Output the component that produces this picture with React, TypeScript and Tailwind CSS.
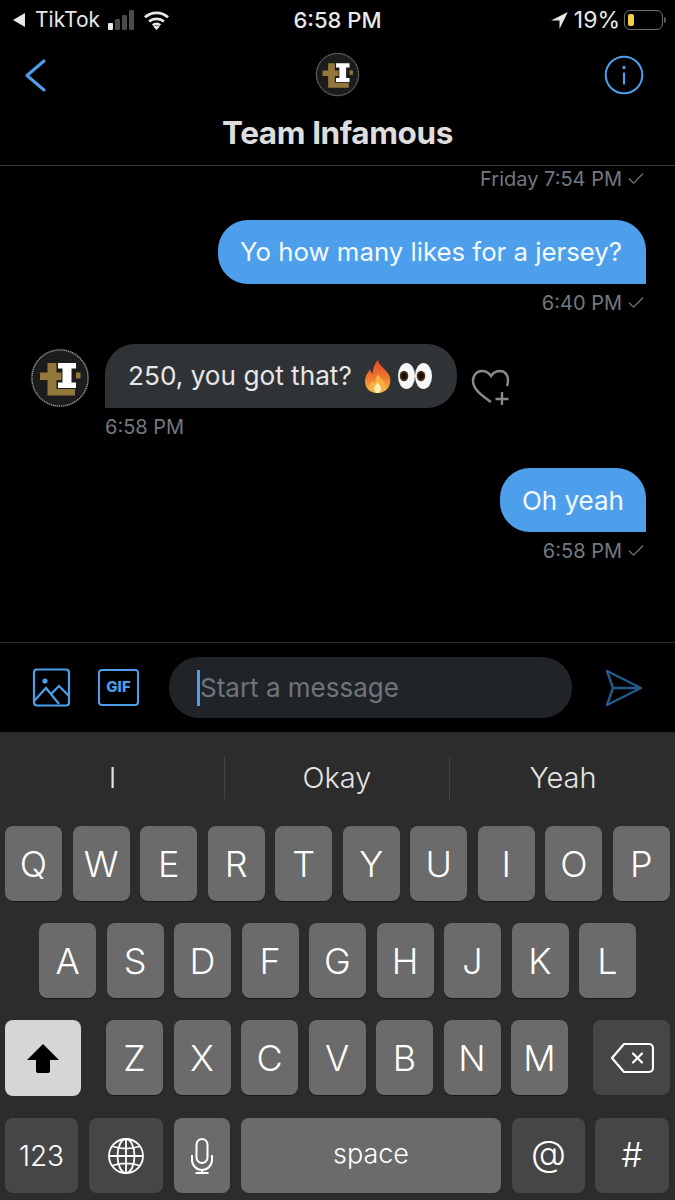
import { Check } from 'lucide-react'

const font = { fontFamily: 'Inter, "Liberation Sans", sans-serif' }

function TeamLogo({ size }: { size: number }) {
  return (
    <svg width={size} height={size} viewBox="0 0 60 60">
      <circle cx="30" cy="30" r="29.500" fill="#1c1c1c" />
      <circle cx="30" cy="30" r="28" fill="none" stroke="#a8a8a8" strokeWidth="1.200" strokeDasharray="1.200 0.800" />
      <path d="M17.500 15h9v9.500h5V32h-5v9h18.500v6.500H17.500V32H10v-7.500h7.500z" fill="#94773a" />
      <path d="M46 24.500h4.500v6H46z" fill="#94773a" />
      <path d="M28 15h18v5.500h-4.500v14H46V40H28v-5.500h4.500v-14H28z" fill="#ffffff" />
    </svg>
  )
}

function Fire() {
  return (
    <svg width="27" height="33" viewBox="0 0 27 33">
      <defs>
        <linearGradient id="flame" x1="0" y1="0" x2="0" y2="1">
          <stop offset="0" stopColor="#e2482a" />
          <stop offset="0.55" stopColor="#f0792c" />
          <stop offset="1" stopColor="#fbc04a" />
        </linearGradient>
      </defs>
      <path d="M14 0c1 6 8 9 11 15 4 8-1 18-11.500 18S-1 24 2 16c1-3 3-4 4-7 1 2 1 4 2.500 5C9 9 10 4 14 0z" fill="url(#flame)" />
      <path d="M14 14c1 4 6 6 7 11 0 5-3 8-7.500 8S5 30 6 25c.5-2 2-3 3-4 .5 1 1 1.500 1.500 2C11 20 12 17 14 14z" fill="#fbb03e" />
      <path d="M13.500 22c1 2 3.500 3.500 3.500 6.500 0 2.500-1.500 4.500-3.500 4.500S10 31 10 28.500c0-2.500 2.500-4 3.500-6.500z" fill="#fdeeb4" />
    </svg>
  )
}

function Eye() {
  return (
    <svg width="17" height="26" viewBox="0 0 17 26">
      <ellipse cx="8.500" cy="13" rx="8.500" ry="13" fill="#f7f7f7" />
      <ellipse cx="6" cy="13" rx="4.300" ry="5.300" fill="#4f2c12" />
      <ellipse cx="6" cy="13" rx="2.600" ry="3.200" fill="#111" />
    </svg>
  )
}

function Stamp({ text, check = true }: { text: string; check?: boolean }) {
  return (
    <div className="flex items-center gap-[4px] text-[20px] leading-[22px] text-[#73787d]">
      <span>{text}</span>
      {check && <Check size={20} strokeWidth={1.5} />}
    </div>
  )
}

function Key({ label, className = 'w-[57px]' }: { label: string; className?: string }) {
  return (
    <div className={`${className} h-[75px] rounded-[8px] bg-[#6b6b6b] shadow-[0_1px_0_#191919] flex items-center justify-center text-[36px] font-light text-white`}>
      {label}
    </div>
  )
}

const row1 = ['Q', 'W', 'E', 'R', 'T', 'Y', 'U', 'I', 'O', 'P']
const row2 = ['A', 'S', 'D', 'F', 'G', 'H', 'J', 'K', 'L']
const row3 = ['Z', 'X', 'C', 'V', 'B', 'N', 'M']

export default function App() {
  return (
    <div className="w-[675px] h-[1200px] bg-black overflow-hidden flex flex-col" style={font}>
      {/* Status bar */}
      <div className="h-[40px] flex items-center justify-between pl-[12px] pr-[9px] text-[#e8e8e8] text-[21px] relative">
        <div className="flex items-center">
          <svg width="14" height="16" viewBox="0 0 14 16"><path d="M13 1v14L1 8z" fill="#e8e8e8" /></svg>
          <span className="ml-[9px]">TikTok</span>
          <div className="ml-[8px] flex items-end gap-[2px] h-[20px]">
            <div className="w-[5px] h-[7px] bg-[#e8e8e8] rounded-[1px]" />
            <div className="w-[5px] h-[11px] bg-[#4a4a4a] rounded-[1px]" />
            <div className="w-[5px] h-[15px] bg-[#4a4a4a] rounded-[1px]" />
            <div className="w-[5px] h-[20px] bg-[#4a4a4a] rounded-[1px]" />
          </div>
          <svg className="ml-[9px]" width="27" height="20" viewBox="0 0 24 19">
            <path d="M1 7a16 16 0 0 1 22 0M5 11a10.500 10.500 0 0 1 14 0M8.500 14.500a5 5 0 0 1 7 0" fill="none" stroke="#e8e8e8" strokeWidth="2.600" />
            <path d="M12 19l-3-3a4 4 0 0 1 6 0z" fill="#e8e8e8" />
          </svg>
        </div>
        <span className="absolute left-0 right-0 text-center text-[22px] font-medium">6:58 PM</span>
        <div className="flex items-center">
          <svg width="19" height="19" viewBox="0 0 17 17"><path d="M16 1L1 8.500h7.500V16z" fill="#e8e8e8" /></svg>
          <span className="ml-[5px] text-[23px]">19%</span>
          <div className="ml-[4px] w-[39px] h-[20px] rounded-[6px] border border-[#6e6e6e] p-[3px]">
            <div className="w-[6px] h-full rounded-[2px] bg-[#f6cf4a]" />
          </div>
          <div className="ml-[1px] w-[2px] h-[6px] bg-[#5a5a5a] rounded-r" />
        </div>
      </div>

      {/* Nav */}
      <div className="h-[126px] border-b border-[#3a3d40] flex flex-col shrink-0">
        <div className="grid grid-cols-[1fr_auto_1fr] items-center h-[75px] pb-[5px]">
          <svg className="ml-[24px]" width="22" height="33" viewBox="0 0 22 33" fill="none" stroke="#4d9fec" strokeWidth="3" strokeLinecap="round" strokeLinejoin="round">
            <path d="M20 2L3 16.500 20 31" />
          </svg>
          <div className="-mt-[2px]"><TeamLogo size={45} /></div>
          <svg className="justify-self-end mr-[31px]" width="40" height="40" viewBox="0 0 40 40">
            <circle cx="20" cy="20" r="18.300" fill="none" stroke="#4d9fec" strokeWidth="2" />
            <circle cx="20" cy="12.500" r="1.700" fill="#4d9fec" />
            <path d="M20 17.500v12" stroke="#4d9fec" strokeWidth="2.200" />
          </svg>
        </div>
        <div className="text-center text-[31.500px] leading-[36px] font-bold tracking-[-0.4px] text-[#dedede]">Team Infamous</div>
      </div>

      {/* Messages */}
      <div className="h-[476px] shrink-0 pr-[29px] pl-[30px] pt-[2px] flex flex-col">
        <div className="self-end"><Stamp text="Friday 7:54 PM" /></div>
        <div className="self-end mt-[30px] h-[64px] pl-[22px] pr-[24px] rounded-[30px] rounded-br-none bg-[#4d9fec] flex items-center text-[25.770px] text-[#f4f9fe]">
          Yo how many likes for a jersey?
        </div>
        <div className="self-end mt-[8px]"><Stamp text="6:40 PM" /></div>
        <div className="mt-[30px] flex items-start">
          <div className="mt-[4px]"><TeamLogo size={60} /></div>
          <div className="ml-[15px]">
            <div className="h-[64px] w-[352px] pl-[23px] rounded-[30px] rounded-bl-none bg-[#2f3336] flex items-center text-[26.200px] text-[#e6e7e8]">
              250, you got that?
              <span className="ml-[12px] flex items-center"><Fire /><span className="w-[7px]" /><Eye /><Eye /></span>
            </div>
            <div className="mt-[8px]"><Stamp text="6:58 PM" check={false} /></div>
          </div>
          <svg className="ml-[14px] mt-[25px]" width="42" height="38" viewBox="0 0 42 38">
            <path d="M20 33C10 26 2 20 2 12 2 6 6 2 11 2c4 0 7 2 9 5 2-3 5-5 9-5 5 0 8 4 8 9 0 2 0 4-1 6" fill="none" stroke="#8a8a8a" strokeWidth="2.400" />
            <path d="M31 23v13M24.500 30h13" stroke="#8a8a8a" strokeWidth="2.400" />
          </svg>
        </div>
        <div className="self-end mt-[30px] h-[64px] px-[22px] rounded-[30px] rounded-br-none bg-[#4d9fec] flex items-center text-[26px] text-[#f4f9fe]">
          Oh yeah
        </div>
        <div className="self-end mt-[8px]"><Stamp text="6:58 PM" /></div>
      </div>

      {/* Compose bar */}
      <div className="h-[90px] shrink-0 border-t border-[#2c2f32] flex items-center pl-[32px] pr-[32px]">
        <svg width="39" height="39" viewBox="0 0 39 39" fill="none" stroke="#4d9fec" strokeWidth="2.200">
          <rect x="2" y="1.500" width="35" height="36" rx="3" />
          <circle cx="13" cy="13" r="2.600" fill="#4d9fec" stroke="none" />
          <path d="M2 33l12-13 13 16M19 26l8-8 10 10" />
        </svg>
        <div className="ml-[27px] w-[41px] h-[37px] rounded-[4px] border-2 border-[#4d9fec] flex items-center justify-center text-[15px] font-extrabold text-[#4d9fec]">GIF</div>
        <div className="ml-[30px] w-[403px] h-[61px] rounded-[30px] bg-[#202327] flex items-center pl-[28px] text-[26px] text-[#6f757a]">
          <div className="w-[3px] h-[36px] bg-[#4d9fec]" />
          Start a message
        </div>
        <svg className="ml-[33px]" width="38" height="38" viewBox="0 0 38 38" fill="none" stroke="#24598a" strokeWidth="2.400" strokeLinejoin="round">
          <path d="M2 2l34 17L2 36l6-17zM8 19h28" />
        </svg>
      </div>

      {/* Keyboard */}
      <div className="flex-1 bg-[#2c2c2c] px-[5px] flex flex-col">
        <div className="h-[94px] pb-[3px] flex items-center text-[#e4e4e4] text-[29px] font-light">
          <div className="w-[219px] pr-[4px] flex items-center justify-center">I</div>
          <div className="w-[1px] h-[42px] bg-[#444]" />
          <div className="w-[224px] flex items-center justify-center">Okay</div>
          <div className="w-[1px] h-[42px] bg-[#444]" />
          <div className="flex-1 pl-[6px] flex items-center justify-center">Yeah</div>
        </div>
        <div className="flex justify-between">
          {row1.map((k) => <Key key={k} label={k} />)}
        </div>
        <div className="mt-[22px] flex justify-center gap-[10.500px]">
          {row2.map((k) => <Key key={k} label={k} />)}
        </div>
        <div className="mt-[22px] flex items-start">
          <div className="w-[76px] h-[76px] rounded-[8px] bg-[#d6d6d6] flex items-center justify-center">
            <svg width="36" height="34" viewBox="0 0 34 34"><path d="M17 3l16 16H24v11a2 2 0 0 1-2 2h-10a2 2 0 0 1-2-2V19H1z" fill="#000" /></svg>
          </div>
          <div className="ml-[25px] flex gap-[10.500px]">
            {row3.map((k) => <Key key={k} label={k} />)}
          </div>
          <div className="ml-[25px] w-[77px] h-[75px] rounded-[8px] bg-[#464646] flex items-center justify-center">
            <svg width="44" height="32" viewBox="0 0 44 32" fill="none" stroke="#fff" strokeWidth="2.200" strokeLinejoin="round">
              <path d="M14 2h25a4 4 0 0 1 4 4v20a4 4 0 0 1-4 4H14L2 16z" />
              <path d="M23 11.500l9 9M32 11.500l-9 9" strokeLinecap="round" />
            </svg>
          </div>
        </div>
        <div className="mt-[22px] flex gap-[11px] text-white">
          <div className="w-[73px] h-[75px] rounded-[8px] bg-[#464646] flex items-center justify-center text-[28px] font-light">123</div>
          <div className="w-[74px] h-[75px] rounded-[8px] bg-[#464646] flex items-center justify-center">
            <svg width="36" height="36" viewBox="0 0 36 36" fill="none" stroke="#fff" strokeWidth="1.800">
              <circle cx="18" cy="18" r="17" />
              <ellipse cx="18" cy="18" rx="8.500" ry="17" />
              <path d="M18 1v34M1 18h34M4.500 8.500c8 2.500 19 2.500 27 0M4.500 27.500c8-2.500 19-2.500 27 0" />
            </svg>
          </div>
          <div className="w-[56px] h-[75px] rounded-[8px] bg-[#6b6b6b] flex items-center justify-center">
            <svg width="22" height="36" viewBox="0 0 22 36" fill="none" stroke="#fff" strokeWidth="2">
              <rect x="5.500" y="1" width="11" height="24" rx="5.500" />
              <path d="M1 17v5a10 10 0 0 0 20 0v-5M11 32v3M4.500 35h13" />
            </svg>
          </div>
          <div className="w-[260px] h-[75px] pb-[2px] rounded-[8px] bg-[#6b6b6b] flex items-center justify-center text-[27px] font-light">space</div>
          <div className="w-[73px] h-[75px] pb-[6px] rounded-[8px] bg-[#464646] flex items-center justify-center text-[36px] font-light">@</div>
          <div className="w-[74px] -ml-[1px] h-[75px] pb-[2px] rounded-[8px] bg-[#464646] flex items-center justify-center text-[34px] font-light">#</div>
        </div>
      </div>
    </div>
  )
}
